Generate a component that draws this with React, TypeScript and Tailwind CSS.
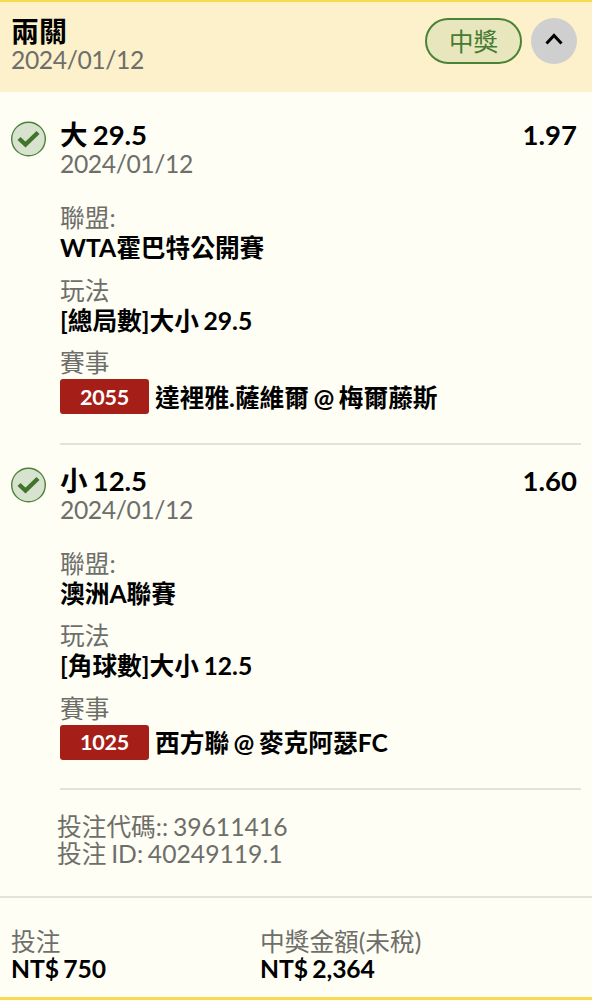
interface Leg {
  pick: string;
  date: string;
  odds: string;
  league: string;
  market: string;
  code: string;
  match: string;
}

const LEGS: Leg[] = [
  {
    pick: '大 29.5',
    date: '2024/01/12',
    odds: '1.97',
    league: 'WTA霍巴特公開賽',
    market: '[總局數]大小 29.5',
    code: '2055',
    match: '達裡雅.薩維爾 @ 梅爾藤斯',
  },
  {
    pick: '小 12.5',
    date: '2024/01/12',
    odds: '1.60',
    league: '澳洲A聯賽',
    market: '[角球數]大小 12.5',
    code: '1025',
    match: '西方聯 @ 麥克阿瑟FC',
  },
];

export default function App() {
  return (
    <div className="flex h-[1000px] w-[592px] flex-col overflow-hidden whitespace-nowrap border-t-2 border-b-3 border-[#f8d94f] bg-[#fefef5] font-['Lato','Noto_Sans_CJK_TC',sans-serif] text-[24.7px] text-black [word-spacing:-1.5px]">
      <header className="flex h-[90px] shrink-0 items-start justify-between bg-[#fdf1cb] pl-[11px] pr-[15px] pt-[15px]">
        <div>
          <h1 className="mb-px text-[28px] font-bold leading-7">兩關</h1>
          <Muted>2024/01/12</Muted>
        </div>
        <div className="mt-px flex items-center gap-[9px]">
          <span className="flex h-[46px] w-[97px] items-center justify-center rounded-full border-2 border-[#4a8238] bg-[#e8e6bd] pt-[2px] text-[24.5px] text-[#457b32]">
            中獎
          </span>
          <button className="grid size-[46px] place-items-center rounded-full bg-[#cfcfd0]" aria-label="收合">
            <ChevronIcon />
          </button>
        </div>
      </header>

      <main className="shrink-0 pl-[11px] pr-[11px] pt-[7px]">
        {LEGS.map((leg) => (
          <LegRow key={leg.code} leg={leg} />
        ))}
        <div className="ml-[46px] mt-6 leading-[26.5px] text-[#6e6e6a]">
          <p>投注代碼:: 39611416</p>
          <p>投注 ID: 40249119.1</p>
        </div>
      </main>

      <footer className="mt-[29px] flex shrink-0 border-t-2 border-[#e3e3db] pl-[11px] pt-[31px]">
        <Total label="投注" value="NT$ 750" />
        <Total label="中獎金額(未稅)" value="NT$ 2,364" />
      </footer>
    </div>
  );
}

function LegRow({ leg }: { leg: Leg }) {
  return (
    <section className="flex gap-[14px] pt-[21px]">
      <CheckIcon />
      <div className="h-[324.5px] flex-1 border-b-2 border-[#e3e3db]">
        <div className="flex justify-between pr-1 text-[27.5px] font-bold leading-[30px]">
          <h2>{leg.pick}</h2>
          <span>{leg.odds}</span>
        </div>
        <Muted>{leg.date}</Muted>
        <div className="mt-[25px] flex flex-col gap-[12.5px] leading-[30px]">
          <Field label="聯盟:">{leg.league}</Field>
          <Field label="玩法">{leg.market}</Field>
          <div>
            <p className="text-[#6e6e6a]">賽事</p>
            <div className="mt-px flex items-center gap-[6px]">
              <span className="grid h-[35px] w-[89px] place-items-center rounded-[3px] bg-[#a51e17] text-[21.5px] font-bold tracking-[-0.2px] text-white">
                {leg.code}
              </span>
              <span className="pt-[2px] font-bold">{leg.match}</span>
            </div>
          </div>
        </div>
      </div>
    </section>
  );
}

function Muted({ children }: { children: string }) {
  return <p className="leading-7 tracking-[-0.4px] text-[#6e6e6a]">{children}</p>;
}

function Field({ label, children }: { label: string; children: string }) {
  return (
    <div>
      <p className="text-[#6e6e6a]">{label}</p>
      <p className="font-bold">{children}</p>
    </div>
  );
}

function Total({ label, value }: { label: string; value: string }) {
  return (
    <div className="w-[249px] leading-[26.5px]">
      <p className="text-[#6e6e6a]">{label}</p>
      <p className="font-bold tracking-[-0.1px]">{value}</p>
    </div>
  );
}

function CheckIcon() {
  return (
    <svg className="mt-px shrink-0" width="35" height="36" viewBox="0 0 35 36" fill="none">
      <circle cx="17.5" cy="18" r="16.8" fill="#d8e3cf" stroke="#4a8238" strokeWidth="1.4" />
      <path d="M8 17.5l6.5 6L27 11.5" stroke="#41752c" strokeWidth="4.4" />
    </svg>
  );
}

function ChevronIcon() {
  return (
    <svg className="-mt-1" width="18" height="12" viewBox="0 0 18 12" fill="none">
      <path d="M1.5 10.5l7.5-8 7.5 8" stroke="currentColor" strokeWidth="3" />
    </svg>
  );
}
